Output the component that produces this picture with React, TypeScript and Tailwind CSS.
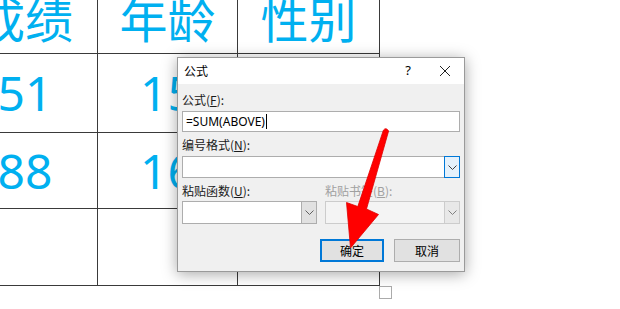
import React from "react";

const cjk = { fontFamily: '"Noto Sans", "Noto Sans CJK SC", sans-serif' };
const ui = { fontFamily: '"Noto Sans CJK SC", "Noto Sans", sans-serif' };

function Cell({ children, top }: { children?: React.ReactNode; top?: boolean }) {
  return (
    <div
      className={`bg-white flex justify-center ${top ? "items-end pb-[9px]" : "items-center"} text-[48px] leading-none text-[#00b0f0]`}
      style={cjk}
    >
      {children}
    </div>
  );
}

function Chevron({ color = "#606060" }: { color?: string }) {
  return (
    <svg width="9" height="5" viewBox="0 0 9 5">
      <path d="M0.5 0.5 L4.5 4.5 L8.5 0.5" fill="none" stroke={color} strokeWidth="1" />
    </svg>
  );
}

function Combo({
  className,
  focused,
  disabled,
}: {
  className: string;
  focused?: boolean;
  disabled?: boolean;
}) {
  return (
    <div
      className={`flex border ${disabled ? "border-[#cccccc] bg-[#f4f4f4]" : "border-[#adadad] bg-white"} ${className}`}
    >
      <div className="flex-1" />
      {focused ? (
        <div className="w-[16px] -my-px -mr-px border border-[#0078d7] bg-[#e5f1fb] flex items-center justify-center">
          <Chevron color="#404040" />
        </div>
      ) : (
        <div
          className={`w-[15px] border-l ${disabled ? "border-[#cccccc] bg-[#e8e8e8]" : "border-[#adadad] bg-[#e1e1e1]"} flex items-center justify-center`}
        >
          <Chevron color={disabled ? "#808080" : "#606060"} />
        </div>
      )}
    </div>
  );
}

function Label({ text, k, rest, grey }: { text: string; k: string; rest: string; grey?: boolean }) {
  return (
    <div className={`text-[12px] leading-[16px] h-[16px] ${grey ? "text-[#a0a0a0]" : "text-[#1a1a1a]"}`} style={ui}>
      {text}(<span className="underline">{k}</span>){rest}
    </div>
  );
}

export default function App() {
  return (
    <div className="relative w-[620px] h-[309px] bg-white overflow-hidden">
      <div className="flex flex-col -ml-[47px] w-max">
        <div className="grid grid-cols-[144px_139px_141px] grid-rows-[53px_78px_75px_76px] gap-px bg-[#3a3a3a] pr-px pb-px w-max">
          <Cell top>成绩</Cell>
          <Cell top>年龄</Cell>
          <Cell top>性别</Cell>
          <Cell>51</Cell>
          <Cell>15</Cell>
          <Cell></Cell>
          <Cell>88</Cell>
          <Cell>16</Cell>
          <Cell></Cell>
          <Cell></Cell>
          <Cell></Cell>
          <Cell></Cell>
        </div>
        <div className="ml-[426px] w-[13px] h-[13px] border border-[#ababab]" />
      </div>

      {/* Dialog */}
      <div
        className="absolute left-[177px] top-[57px] w-[288px] h-[215px] border border-[#9a9a9a] bg-[#f0f0f0] flex flex-col shadow-[0_2px_14px_rgba(0,0,0,0.35)]"
        style={ui}
      >
        <div className="h-[26px] bg-white flex items-center pl-[6px] text-[12px] text-black">
          <span className="flex-1">公式</span>
          <span className="w-[20px] text-center text-[13px] mr-[21px]" style={{ fontFamily: '"Noto Sans", sans-serif' }}>
            ?
          </span>
          <svg width="12" height="12" viewBox="0 0 12 12" className="mr-[13px]">
            <path d="M1 1 L11 11 M11 1 L1 11" stroke="#222" strokeWidth="1" />
          </svg>
        </div>
        <div className="flex flex-col px-[4px] pt-[8px]">
          <Label text="公式" k="F" rest=":" />
          <div className="mt-[3px] h-[21px] border border-[#adadad] bg-white flex items-center pl-[3px]">
            <span className="text-[12px] leading-none text-black" style={{ fontFamily: '"Noto Sans", sans-serif' }}>
              =SUM(ABOVE)
            </span>
            <span className="ml-px w-px h-[15px] bg-black" />
          </div>
          <div className="mt-[5px]">
            <Label text="编号格式" k="N" rest=":" />
          </div>
          <Combo className="mt-[3px] h-[22px]" focused />
          <div className="mt-[5px] flex gap-[8px]">
            <div className="w-[135px] flex flex-col">
              <Label text="粘贴函数" k="U" rest=":" />
              <Combo className="mt-[2px] h-[23px]" />
            </div>
            <div className="flex-1 flex flex-col">
              <Label text="粘贴书签" k="B" rest=":" grey />
              <Combo className="mt-[2px] h-[23px]" disabled />
            </div>
          </div>
          <div className="mt-[15px] flex justify-end gap-[10px]">
            <button className="w-[64px] h-[23px] border-2 border-[#0078d7] bg-[#e1e1e1] text-[12px] text-black flex items-center justify-center" style={ui}>
              确定
            </button>
            <button className="w-[66px] h-[23px] border border-[#adadad] bg-[#e1e1e1] text-[12px] text-black flex items-center justify-center" style={ui}>
              取消
            </button>
          </div>
        </div>
      </div>

      {/* Red arrow */}
      <svg className="absolute left-0 top-0 pointer-events-none" width="620" height="309" viewBox="0 0 620 309">
        <path
          d="M383.4 130.2 Q386 126.8 388.6 131 L366.5 209 L378.5 214.5 L350.5 248 L346.5 202.5 L357.8 206.5 Z"
          fill="#ff0000"
          stroke="#e00000"
          strokeWidth="0.8"
          strokeLinejoin="round"
        />
      </svg>
    </div>
  );
}
